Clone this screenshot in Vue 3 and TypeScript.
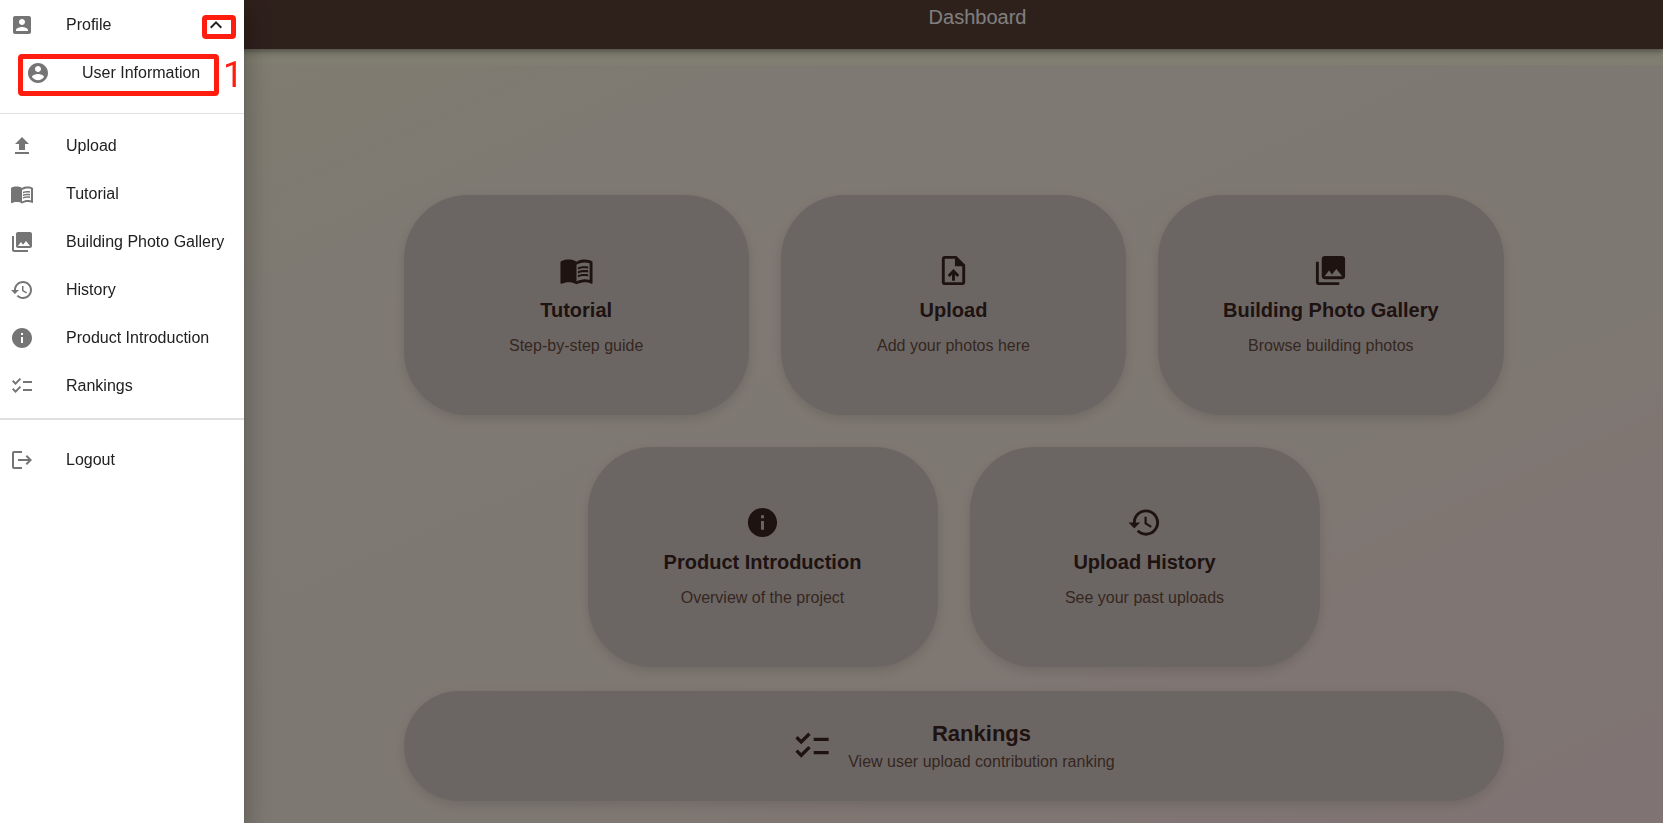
<script setup lang="ts">
import { ref } from 'vue'

interface Item {
  label: string
  icon: string
}

interface Card {
  title: string
  text: string
  icon: string
}

const icons: Record<string, string> = {
  accountBox:
    'M3 5v14c0 1.1.89 2 2 2h14c1.1 0 2-.9 2-2V5c0-1.1-.9-2-2-2H5c-1.11 0-2 .9-2 2zm12 4c0 1.66-1.34 3-3 3s-3-1.34-3-3 1.34-3 3-3 3 1.34 3 3zm-9 8c0-2 4-3.1 6-3.1s6 1.1 6 3.1v1H6v-1z',
  accountCircle:
    'M12 2C6.48 2 2 6.48 2 12s4.48 10 10 10 10-4.48 10-10S17.52 2 12 2zm0 3c1.66 0 3 1.34 3 3s-1.34 3-3 3-3-1.34-3-3 1.34-3 3-3zm0 14.2c-2.5 0-4.71-1.28-6-3.22.03-1.99 4-3.08 6-3.08 1.99 0 5.97 1.09 6 3.08-1.29 1.94-3.5 3.22-6 3.22z',
  expandLess: 'm12 8-6 6 1.41 1.41L12 10.83l4.59 4.58L18 14z',
  upload: 'M5 20h14v-2H5v2zm0-10h4v6h6v-6h4l-7-7-7 7z',
  book:
    'M21 5c-1.11-.35-2.33-.5-3.5-.5-1.95 0-4.05.4-5.5 1.5-1.45-1.1-3.55-1.5-5.5-1.5S2.45 4.9 1 6v14.65c0 .25.25.5.5.5.1 0 .15-.05.25-.05C3.1 20.45 5.05 20 6.5 20c1.95 0 4.05.4 5.5 1.5 1.35-.85 3.8-1.5 5.5-1.5 1.65 0 3.35.3 4.75 1.05.1.05.15.05.25.05.25 0 .5-.25.5-.5V6c-.6-.45-1.25-.75-2-1zm0 13.5c-1.1-.35-2.3-.5-3.5-.5-1.7 0-4.15.65-5.5 1.5V8c1.35-.85 3.8-1.5 5.5-1.5 1.2 0 2.4.15 3.5.5v11.5zM17.5 10.5c.88 0 1.73.09 2.5.26V9.24c-.79-.15-1.64-.24-2.5-.24-1.7 0-3.24.29-4.5.83v1.66c1.13-.64 2.7-.99 4.5-.99zM13 12.49v1.66c1.13-.64 2.7-.99 4.5-.99.88 0 1.73.09 2.5.26V11.9c-.79-.15-1.64-.24-2.5-.24-1.7 0-3.24.3-4.5.83zM17.5 14.33c-1.7 0-3.24.29-4.5.83v1.66c1.13-.64 2.7-.99 4.5-.99.88 0 1.73.09 2.5.26v-1.52c-.79-.16-1.64-.24-2.5-.24z',
  gallery:
    'M22 16V4c0-1.1-.9-2-2-2H8c-1.1 0-2 .9-2 2v12c0 1.1.9 2 2 2h12c1.1 0 2-.9 2-2zm-11-4 2.03 2.71L16 11l4 5H8l3-4zM2 6v14c0 1.1.9 2 2 2h14v-2H4V6H2z',
  history:
    'M13 3c-4.97 0-9 4.03-9 9H1l3.89 3.89.07.14L9 12H6c0-3.87 3.13-7 7-7s7 3.13 7 7-3.13 7-7 7c-1.93 0-3.68-.79-4.94-2.06l-1.42 1.42C8.27 19.99 10.51 21 13 21c4.97 0 9-4.03 9-9s-4.03-9-9-9zm-1 5v5l4.28 2.54.72-1.21-3.5-2.08V8H12z',
  info:
    'M12 2C6.48 2 2 6.48 2 12s4.48 10 10 10 10-4.48 10-10S17.52 2 12 2zm1 15h-2v-6h2v6zm0-8h-2V7h2v2z',
  checklist:
    'M22 7h-9v2h9V7zm0 8h-9v2h9v-2zM5.54 11 2 7.46l1.41-1.41 2.12 2.12 4.24-4.24 1.41 1.41L5.54 11zm0 8L2 15.46l1.41-1.41 2.12 2.12 4.24-4.24 1.41 1.41L5.54 19z',
  logout:
    'm17 7-1.41 1.41L18.17 11H8v2h10.17l-2.58 2.58L17 17l5-5zM4 5h8V3H4c-1.1 0-2 .9-2 2v14c0 1.1.9 2 2 2h8v-2H4V5z',
  uploadFile:
    'M14 2H6c-1.1 0-1.99.9-1.99 2L4 20c0 1.1.89 2 1.99 2H18c1.1 0 2-.9 2-2V8l-6-6zm4 18H6V4h7v5h5v11zM8 15.01l1.41 1.41L11 14.84V19h2v-4.16l1.59 1.59L16 15.01 12.01 11 8 15.01z',
}

const items: Item[] = [
  { label: 'Upload', icon: 'upload' },
  { label: 'Tutorial', icon: 'book' },
  { label: 'Building Photo Gallery', icon: 'gallery' },
  { label: 'History', icon: 'history' },
  { label: 'Product Introduction', icon: 'info' },
  { label: 'Rankings', icon: 'checklist' },
]

const topCards: Card[] = [
  { title: 'Tutorial', text: 'Step-by-step guide', icon: 'book' },
  { title: 'Upload', text: 'Add your photos here', icon: 'uploadFile' },
  { title: 'Building Photo Gallery', text: 'Browse building photos', icon: 'gallery' },
]

const middleCards: Card[] = [
  { title: 'Product Introduction', text: 'Overview of the project', icon: 'info' },
  { title: 'Upload History', text: 'See your past uploads', icon: 'history' },
]

const profileOpen = ref(true)
</script>

<template>
  <div class="page">
    <header class="bar">
      <h1>Dashboard</h1>
    </header>
    <main class="content">
      <div class="board">
        <div class="row three">
          <button v-for="c in topCards" :key="c.title" class="card" type="button">
            <svg viewBox="0 0 24 24" aria-hidden="true"><path :d="icons[c.icon]" /></svg>
            <strong>{{ c.title }}</strong>
            <span>{{ c.text }}</span>
          </button>
        </div>
        <div class="row two">
          <button v-for="c in middleCards" :key="c.title" class="card" type="button">
            <svg viewBox="0 0 24 24" aria-hidden="true"><path :d="icons[c.icon]" /></svg>
            <strong>{{ c.title }}</strong>
            <span>{{ c.text }}</span>
          </button>
        </div>
        <button class="card wide" type="button">
          <svg viewBox="0 0 24 24" aria-hidden="true"><path :d="icons.checklist" /></svg>
          <span class="stack">
            <strong>Rankings</strong>
            <span>View user upload contribution ranking</span>
          </span>
        </button>
      </div>
    </main>

    <div class="backdrop"></div>

    <nav class="drawer" aria-label="Main menu">
      <div class="group profile">
        <button
          class="item"
          type="button"
          :aria-expanded="profileOpen"
          @click="profileOpen = !profileOpen"
        >
          <svg viewBox="0 0 24 24" aria-hidden="true"><path :d="icons.accountBox" /></svg>
          <span>Profile</span>
          <svg class="chevron" viewBox="0 0 24 24" aria-hidden="true">
            <path :d="icons.expandLess" />
          </svg>
        </button>
        <a v-if="profileOpen" class="item nested" href="#user">
          <svg viewBox="0 0 24 24" aria-hidden="true"><path :d="icons.accountCircle" /></svg>
          <span>User Information</span>
        </a>
        <i class="mark mark-toggle"></i>
        <i class="mark mark-user"></i>
        <b class="step">1</b>
      </div>
      <div class="group links">
        <a v-for="i in items" :key="i.label" class="item" href="#page">
          <svg viewBox="0 0 24 24" aria-hidden="true"><path :d="icons[i.icon]" /></svg>
          <span>{{ i.label }}</span>
        </a>
      </div>
      <div class="group exit">
        <a class="item" href="#logout">
          <svg viewBox="0 0 24 24" aria-hidden="true"><path :d="icons.logout" /></svg>
          <span>Logout</span>
        </a>
      </div>
    </nav>
  </div>
</template>

<style>
body {
  margin: 0;
}
</style>

<style scoped>
.page {
  box-sizing: border-box;
  display: flex;
  flex-direction: column;
  min-height: 100vh;
  background: #fffce0;
  font-family: 'Liberation Sans', Arial, sans-serif;
  font-size: 16px;
  line-height: 24px;
}

svg {
  flex: none;
  width: 24px;
  height: 24px;
  fill: currentColor;
}

.bar {
  position: relative;
  box-sizing: border-box;
  height: 49px;
  padding-left: 292px;
  background: #5d4037;
  color: #fff;
  text-align: center;
  box-shadow:
    0 2px 4px -1px rgba(0, 0, 0, 0.2),
    0 4px 5px rgba(0, 0, 0, 0.14),
    0 1px 10px rgba(0, 0, 0, 0.12);
}

.bar h1 {
  margin: 0;
  font-size: 20px;
  font-weight: 400;
  line-height: 34px;
}

.content {
  flex: 1;
  box-sizing: border-box;
  margin-top: 16px;
  padding: 130px 32px 22px 276px;
  background: linear-gradient(to bottom right, #fffae0, #fdf3e5 25%, #fdf0e4 66%, #ffeae6 80%, #ffe9e7);
}

.board {
  display: flex;
  flex-direction: column;
  max-width: 1100px;
  margin: 0 auto;
}

.row {
  display: grid;
  gap: 32px;
}

.three {
  grid-template-columns: repeat(3, 1fr);
}

.two {
  grid-template-columns: repeat(2, minmax(0, 350px));
  justify-content: center;
  margin-top: 32px;
}

.card {
  display: flex;
  flex-direction: column;
  align-items: center;
  justify-content: center;
  min-height: 220px;
  padding: 16px;
  border: 0;
  border-radius: 64px;
  background: #d7ccc8;
  color: #6d4c41;
  font: inherit;
  cursor: pointer;
  box-shadow: 0 4px 12px rgba(0, 0, 0, 0.12);
}

.card svg {
  width: 35px;
  height: 35px;
  margin-bottom: 6px;
  color: #3e2723;
}

.card strong {
  margin-bottom: 8px;
  color: #3e2723;
  font-size: 20px;
  line-height: 32px;
}

.card.wide {
  flex-direction: row;
  gap: 16px;
  min-height: 110px;
  margin-top: 24px;
}

.wide svg {
  width: 40px;
  height: 40px;
  margin: 0;
}

.stack {
  display: flex;
  flex-direction: column;
  align-items: center;
}

.wide strong {
  margin: 0;
  font-size: 22px;
}

.backdrop {
  position: fixed;
  inset: 0;
  background: rgba(0, 0, 0, 0.5);
}

.drawer {
  position: fixed;
  inset: 0 auto 0 0;
  box-sizing: border-box;
  width: 244px;
  padding-top: 1px;
  background: #fff;
  box-shadow:
    0 8px 10px -5px rgba(0, 0, 0, 0.2),
    0 16px 24px 2px rgba(0, 0, 0, 0.14),
    0 6px 30px 5px rgba(0, 0, 0, 0.12);
}

.profile {
  position: relative;
  padding-bottom: 16px;
  border-bottom: 1px solid #e0e0e0;
}

.links {
  padding: 8px 0;
  border-bottom: 2px solid #e0e0e0;
}

.exit {
  padding-top: 16px;
}

.item {
  box-sizing: border-box;
  display: flex;
  align-items: center;
  gap: 32px;
  width: 100%;
  height: 48px;
  padding: 0 16px 0 10px;
  border: 0;
  background: none;
  color: #212121;
  font: inherit;
  text-align: left;
  text-decoration: none;
  white-space: nowrap;
  cursor: pointer;
}

.item svg {
  color: #757575;
}

.item .chevron {
  margin-left: auto;
  color: #212121;
}

.nested {
  padding-left: 26px;
}

.mark {
  position: absolute;
  box-sizing: border-box;
  border: 5px solid #ff1d10;
  border-radius: 4px;
  pointer-events: none;
}

.mark-toggle {
  top: 14px;
  left: 202px;
  width: 34px;
  height: 24px;
}

.mark-user {
  top: 53px;
  left: 18px;
  width: 201px;
  height: 42px;
}

.step {
  position: absolute;
  top: 56px;
  left: 223px;
  color: #ff1d10;
  font-family: Roboto, sans-serif;
  font-size: 36px;
  font-weight: 400;
  line-height: 36px;
}
</style>
